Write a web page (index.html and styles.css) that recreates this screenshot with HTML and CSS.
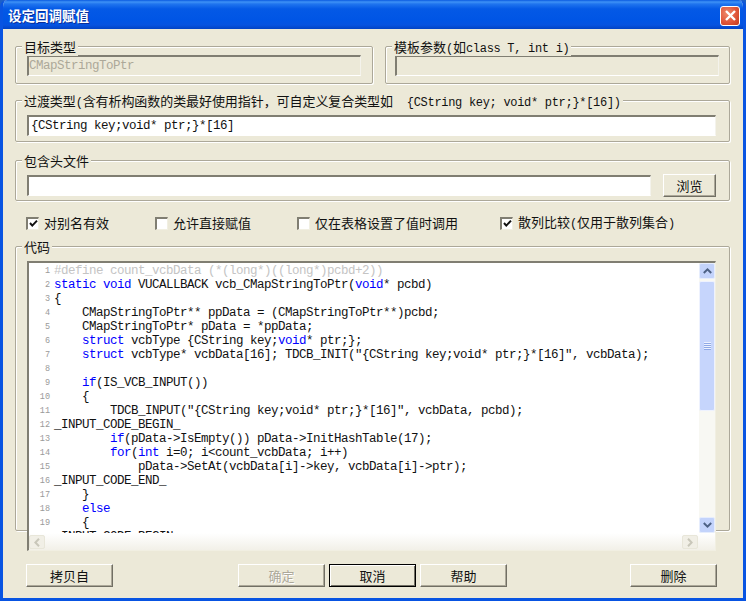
FILE: index.html
```html
<!DOCTYPE html>
<html lang="zh">
<head>
<meta charset="utf-8">
<title>设定回调赋值</title>
<link rel="stylesheet" href="styles.css">
</head>
<body>
<div class="window">
  <header class="titlebar">
    <span class="title">设定回调赋值</span>
    <span class="close">
      <svg width="13" height="13" viewBox="0 0 13 13"><path d="M2 2 L11 11 M11 2 L2 11" stroke="#fff" stroke-width="2.4" fill="none"/></svg>
    </span>
  </header>
  <main class="content">
    <div class="row-top">
      <section class="group group-target">
        <span class="legend">目标类型</span>
        <div class="field field-disabled field-target">CMapStringToPtr</div>
      </section>
      <section class="group group-template">
        <span class="legend">模板参数<span class="latin">(</span>如<span class="latin">class T, int i)</span></span>
        <div class="field field-disabled field-template"></div>
      </section>
    </div>
    <section class="group group-filter">
      <span class="legend legend-filter">过渡类型<span class="latin">(</span>含有析构函数的类最好使用指针，可自定义复合类型如<span class="latin">  {CString key; void* ptr;}*[16])</span></span>
      <div class="field field-filter">{CString key;void* ptr;}*[16]</div>
    </section>
    <section class="group group-include">
      <span class="legend">包含头文件</span>
      <div class="include-row">
        <div class="field field-include"></div>
        <button class="btn btn-browse">浏览</button>
      </div>
    </section>
    <div class="checks">
      <label class="check check-a"><span class="box"><svg width="9" height="9" viewBox="0 0 9 9"><path d="M1 4 L3.3 6.6 L8 1.6" stroke="#111" stroke-width="2" fill="none"/></svg></span>对别名有效</label>
      <label class="check check-b"><span class="box"></span>允许直接赋值</label>
      <label class="check check-c"><span class="box"></span>仅在表格设置了值时调用</label>
      <label class="check"><span class="box"><svg width="9" height="9" viewBox="0 0 9 9"><path d="M1 4 L3.3 6.6 L8 1.6" stroke="#111" stroke-width="2" fill="none"/></svg></span><span>散列比较<span class="latin">(</span>仅用于散列集合<span class="latin">)</span></span></label>
    </div>
    <section class="group group-code">
      <span class="legend">代码</span>
      <div class="editor">
        <div class="editor-main">
          <div class="code">
            <div class="line"><span class="num">1</span><span class="src muted">#define count_vcbData (*(long*)((long*)pcbd+2))</span></div>
            <div class="line"><span class="num">2</span><span class="src"><b>static</b> <b>void</b> VUCALLBACK vcb_CMapStringToPtr(<b>void</b>* pcbd)</span></div>
            <div class="line"><span class="num">3</span><span class="src">{</span></div>
            <div class="line"><span class="num">4</span><span class="src">    CMapStringToPtr** ppData = (CMapStringToPtr**)pcbd;</span></div>
            <div class="line"><span class="num">5</span><span class="src">    CMapStringToPtr* pData = *ppData;</span></div>
            <div class="line"><span class="num">6</span><span class="src">    <b>struct</b> vcbType {CString key;<b>void</b>* ptr;};</span></div>
            <div class="line"><span class="num">7</span><span class="src">    <b>struct</b> vcbType* vcbData[16]; TDCB_INIT("{CString key;void* ptr;}*[16]", vcbData);</span></div>
            <div class="line"><span class="num">8</span><span class="src"></span></div>
            <div class="line"><span class="num">9</span><span class="src">    <b>if</b>(IS_VCB_INPUT())</span></div>
            <div class="line"><span class="num">10</span><span class="src">    {</span></div>
            <div class="line"><span class="num">11</span><span class="src">        TDCB_INPUT("{CString key;void* ptr;}*[16]", vcbData, pcbd);</span></div>
            <div class="line"><span class="num">12</span><span class="src">_INPUT_CODE_BEGIN_</span></div>
            <div class="line"><span class="num">13</span><span class="src">        <b>if</b>(pData-&gt;IsEmpty()) pData-&gt;InitHashTable(17);</span></div>
            <div class="line"><span class="num">14</span><span class="src">        <b>for</b>(<b>int</b> i=0; i&lt;count_vcbData; i++)</span></div>
            <div class="line"><span class="num">15</span><span class="src">            pData-&gt;SetAt(vcbData[i]-&gt;key, vcbData[i]-&gt;ptr);</span></div>
            <div class="line"><span class="num">16</span><span class="src">_INPUT_CODE_END_</span></div>
            <div class="line"><span class="num">17</span><span class="src">    }</span></div>
            <div class="line"><span class="num">18</span><span class="src">    <b>else</b></span></div>
            <div class="line"><span class="num">19</span><span class="src">    {</span></div>
            <div class="line"><span class="num">20</span><span class="src">_INPUT_CODE_BEGIN_</span></div>
          </div>
          <div class="vscroll">
            <div class="sb-btn"><svg width="9" height="6" viewBox="0 0 9 6"><path d="M0.8 5 L4.5 1.4 L8.2 5" stroke="#4d6185" stroke-width="2" fill="none"/></svg></div>
            <div class="thumb"><div class="grip"></div></div>
            <div class="sb-track"></div>
            <div class="sb-btn"><svg width="9" height="6" viewBox="0 0 9 6"><path d="M0.8 1 L4.5 4.6 L8.2 1" stroke="#4d6185" stroke-width="2" fill="none"/></svg></div>
          </div>
        </div>
        <div class="hscroll">
          <div class="sb-btn-off"><svg width="6" height="9" viewBox="0 0 6 9"><path d="M5 0.8 L1.4 4.5 L5 8.2" stroke="#c9c7ba" stroke-width="2" fill="none"/></svg></div>
          <div class="sb-track-h"></div>
          <div class="sb-btn-off"><svg width="6" height="9" viewBox="0 0 6 9"><path d="M1 0.8 L4.6 4.5 L1 8.2" stroke="#c9c7ba" stroke-width="2" fill="none"/></svg></div>
        </div>
      </div>
    </section>
    <div class="actions">
      <button class="btn">拷贝自</button>
      <button class="btn btn-disabled btn-ok">确定</button>
      <button class="btn btn-default">取消</button>
      <button class="btn">帮助</button>
      <button class="btn btn-delete">删除</button>
    </div>
  </main>
</div>
</body>
</html>
```

FILE: styles.css
```css
* { box-sizing: border-box; }
html, body { margin: 0; padding: 0; background: #1c5fc8; }
body {
  width: 746px;
  height: 601px;
  overflow: hidden;
  font-family: "Noto Sans CJK SC", "Liberation Sans", sans-serif;
  font-size: 13px;
  color: #111;
}
.window {
  width: 746px;
  height: 601px;
  display: flex;
  flex-direction: column;
  background: #ece9d8;
  border: solid #0854e2;
  border-width: 0 3px 3px 3px;
  border-radius: 7px 7px 0 0;
  overflow: hidden;
}
.titlebar {
  height: 29px;
  margin: 0 -3px;
  flex: none;
  display: flex;
  align-items: center;
  justify-content: space-between;
  padding: 0 6px 0 8px;
  background: linear-gradient(to bottom, #0a5ae0 0, #3e92f6 2px, #1f74ee 4px, #0459e6 9px, #0055e5 20px, #0653e0 25px, #0243c4 29px);
}
.title {
  color: #fff;
  font-size: 13.5px;
  font-weight: 700;
  text-shadow: 1px 1px 0 #0a2f9a;
}
.close {
  width: 20px;
  height: 20px;
  margin-top: 2px;
  display: flex;
  align-items: center;
  justify-content: center;
  border: 1px solid #fff;
  border-radius: 3px;
  background: radial-gradient(circle at 35% 35%, #ee8a6c 0, #e0563a 55%, #c33a1c 100%);
}
.content {
  flex: 1;
  display: flex;
  flex-direction: column;
  padding: 17px 12px 0;
}
.row-top { display: flex; gap: 12px; }
.group {
  position: relative;
  flex: none;
  border: 1px solid #aca899;
  border-radius: 2px;
  box-shadow: 1px 1px 0 #fff, inset 1px 1px 0 #fff;
}
.legend {
  position: absolute;
  left: 6px;
  top: -9px;
  padding: 0 2px;
  height: 18px;
  line-height: 18px;
  background: #ece9d8;
  white-space: pre;
  font-size: 13px;
}
.legend-filter { letter-spacing: -0.07px; }
.latin {
  font-family: "Liberation Mono", monospace;
  font-size: 12px;
  letter-spacing: -0.3px;
}
.group-target { width: 358px; height: 38px; padding: 8px 0 0 11px; }
.group-template { width: 345px; height: 38px; padding: 8px 0 0 9px; }
.group-filter { width: 715px; height: 42px; margin-top: 16px; padding: 14px 0 0 11px; }
.group-include { width: 715px; height: 41px; margin-top: 18px; padding: 13px 0 0 11px; }
.group-code { width: 715px; height: 285px; margin-top: 14px; padding: 14px 0 0 11px; }
.field {
  height: 21px;
  line-height: 19px;
  padding: 0 0 0 2px;
  background: #fff;
  border: solid;
  border-width: 2px 1px 1px 2px;
  border-color: #807e72 #f4f3ec #fff #807e72;
  font-family: "Liberation Mono", monospace;
  font-size: 12.5px;
  letter-spacing: -0.5px;
  white-space: pre;
}
.field-disabled { background: #ece9d8; color: #aca899; }
.field-target { width: 334px; padding-left: 0; }
.field-template { width: 324px; }
.field-filter { width: 689px; }
.field-include { width: 624px; }
.include-row { display: flex; align-items: center; gap: 12px; }
.btn {
  width: 87px;
  height: 23px;
  padding: 0;
  flex: none;
  background: #ece9d8;
  border: 1px solid;
  border-color: #fff #716f64 #716f64 #fff;
  box-shadow: inset -1px -1px 0 #aca899;
  color: #111;
  font-family: "Noto Sans CJK SC", sans-serif;
  font-size: 13px;
  line-height: 20px;
}
.btn-browse { width: 53px; }
.btn-disabled { color: #aca899; text-shadow: 1px 1px 0 #fff; }
.btn-ok { margin-left: 121px; }
.btn-default {
  border: 1px solid #000;
  box-shadow: inset 1px 1px 0 #fff, inset -1px -1px 0 #716f64;
}
.btn-delete { margin-left: 119px; }
.checks {
  margin-top: 13px;
  height: 18px;
  padding-left: 11px;
  display: flex;
  align-items: center;
  line-height: 18px;
}
.check { display: flex; align-items: center; gap: 5px; white-space: nowrap; }
.check-a { width: 129px; }
.check-b { width: 142px; }
.check-c { width: 203px; }
.box {
  width: 13px;
  height: 13px;
  flex: none;
  display: flex;
  align-items: center;
  justify-content: center;
  background: #fff;
  border: solid;
  border-width: 2px 1px 1px 2px;
  border-color: #807e72 #f1efe2 #f1efe2 #807e72;
}
.editor {
  position: relative;
  width: 689px;
  height: 290px;
  display: flex;
  flex-direction: column;
  background: #fff;
  border: solid;
  border-width: 2px 1px 1px 2px;
  border-color: #807e72 #f1efe2 #f1efe2 #807e72;
}
.editor-main { height: 270px; flex: none; display: flex; }
.code { flex: 1; overflow: hidden; padding-top: 1px; }
.line {
  display: flex;
  height: 14px;
  line-height: 14px;
  font-family: "Liberation Mono", monospace;
  font-size: 12.5px;
  letter-spacing: -0.5px;
  color: #111;
}
.num {
  width: 21px;
  flex: none;
  text-align: right;
  color: #9a9a9a;
  font-size: 8.5px;
  letter-spacing: 0;
}
.src { padding-left: 4px; white-space: pre; }
.src b { font-weight: 400; color: #0000ff; }
.muted { color: #c4c4c4; }
.vscroll {
  width: 16px;
  flex: none;
  display: flex;
  flex-direction: column;
  background: #f8f8f3;
}
.sb-btn {
  height: 16px;
  flex: none;
  display: flex;
  align-items: center;
  justify-content: center;
  background: #c3d3fb;
  border: 1px solid #e6edfd;
  border-radius: 2px;
}
.thumb {
  margin-top: 2px;
  height: 130px;
  flex: none;
  display: flex;
  align-items: center;
  justify-content: center;
  background: #c6d5fc;
  border: 1px solid #eef2fe;
  border-radius: 2px;
}
.grip {
  width: 7px;
  height: 8px;
  background: repeating-linear-gradient(to bottom, #edf2ff 0 1px, #8fa9e6 1px 2px);
}
.sb-track { flex: 1; }
.hscroll {
  height: 17px;
  display: flex;
  padding: 2px 17px 1px 0;
  background: linear-gradient(to bottom, #fff, #f2f0e8);
}
.sb-btn-off {
  width: 16px;
  height: 14px;
  flex: none;
  display: flex;
  align-items: center;
  justify-content: center;
  background: #f1efe6;
  border: 1px solid #e8e6d9;
  border-radius: 2px;
}
.sb-track-h { flex: 1; }
.actions {
  margin-top: 33px;
  padding-left: 11px;
  display: flex;
  gap: 4px;
}
```
